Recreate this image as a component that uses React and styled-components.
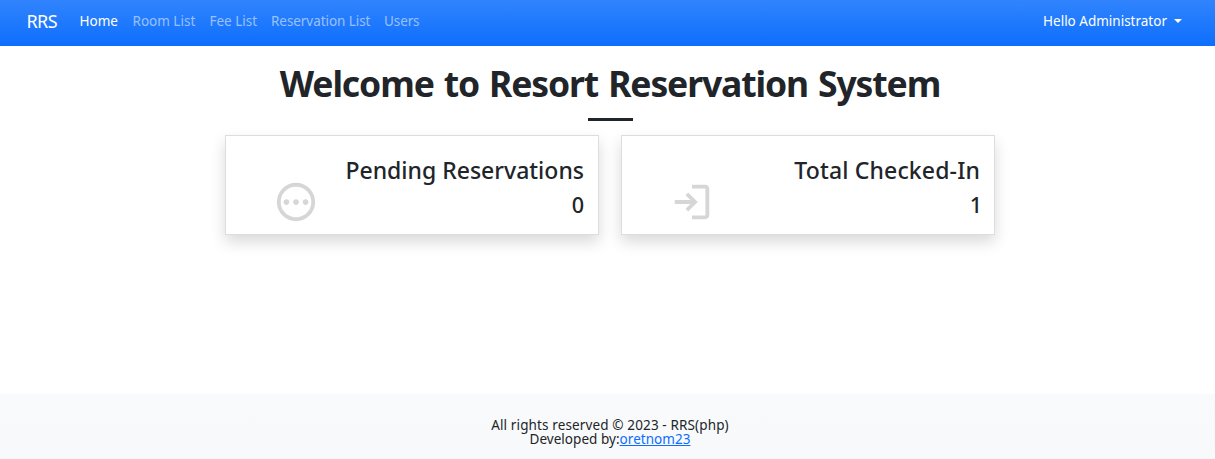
import React from "react";
import styled, { createGlobalStyle } from "styled-components";

const GlobalStyle = createGlobalStyle`
  *, *::before, *::after { box-sizing: border-box; }
  body {
    margin: 0;
    background: #fff;
    color: #212529;
    font-family: "Noto Sans", "Open Sans", sans-serif;
    font-size: 14px;
    overflow: hidden;
  }
`;

const Page = styled.div`
  display: flex;
  flex-direction: column;
  height: 459px;
`;

const Navbar = styled.nav`
  display: flex;
  align-items: center;
  height: 46px;
  padding: 0 33px 4px 26.5px;
  background: linear-gradient(180deg, #3184fd, #0d6efd);
  color: #fff;
  white-space: nowrap;
`;

const Brand = styled.a`
  width: 53px;
  font-size: 18px;
  line-height: 28px;
  letter-spacing: -0.6px;
`;

const NavLinks = styled.div`
  display: flex;
  flex: 1;
`;

const NavLink = styled.a`
  width: ${(p) => p.$width}px;
  font-size: 13.5px;
  line-height: 20px;
  letter-spacing: ${(p) => p.$spacing || 0}px;
  color: ${(p) => (p.$active ? "#fff" : "rgba(255, 255, 255, 0.55)")};
`;

const UserMenu = styled.a`
  display: flex;
  align-items: center;
  gap: 7px;
  font-size: 13.5px;
  line-height: 20px;
`;

const Caret = styled.span`
  border: 4px solid transparent;
  border-top-color: #fff;
  border-bottom: 0;
`;

const Main = styled.main`
  flex: 1;
  display: flex;
  flex-direction: column;
  align-items: center;
  padding: 15px 0 0 5px;
`;

const Title = styled.h1`
  margin: 0;
  font-size: 35.5px;
  line-height: 44px;
  font-weight: 700;
  letter-spacing: -1.12px;
  word-spacing: 1.9px;
  white-space: nowrap;
`;

const Rule = styled.hr`
  width: 45px;
  height: 3px;
  margin: 13px 0 14px;
  border: 0;
  background: #212529;
`;

const Cards = styled.div`
  display: flex;
  gap: 22px;
`;

const Card = styled.section`
  display: flex;
  justify-content: space-between;
  width: 374px;
  height: 100px;
  padding: 17px 14px 0 47px;
  border: 1px solid #dcdddf;
  background: #fff;
  box-shadow: 0 7px 14px rgba(0, 0, 0, 0.15);
`;

const CardIcon = styled.svg`
  width: 46px;
  height: 46px;
  margin-top: 26px;
  fill: #d6d6d6;
`;

const CardText = styled.div`
  font-weight: 500;
  line-height: 34px;
  text-align: right;
  white-space: nowrap;
`;

const CardLabel = styled.div`
  font-size: 23px;
  letter-spacing: ${(p) => p.$spacing}px;
`;

const CardValue = styled.div`
  margin-right: ${(p) => -p.$outset}px;
  font-size: 21.6px;
  line-height: 35px;
`;

const Footer = styled.footer`
  height: 65px;
  padding: 24px 0 0 5px;
  background: linear-gradient(180deg, #f9fafb, #f8f9fa);
  font-size: 13.5px;
  line-height: 14px;
  text-align: center;
`;

const FooterLine = styled.div`
  letter-spacing: ${(p) => p.$spacing}px;
`;

const FooterLink = styled.a`
  color: #0d6efd;
  text-decoration: underline;
`;

const links = [
  { label: "Home", width: 53, active: true },
  { label: "Room List", width: 77 },
  { label: "Fee List", width: 61.5 },
  { label: "Reservation List", width: 113, spacing: -0.06 },
  { label: "Users", width: 40, spacing: -0.1 },
];

const pendingPath =
  "M280-420q25 0 42.500-17.500T340-480q0-25-17.500-42.500T280-540q-25 0-42.500 17.500T220-480q0 25 17.500 42.500T280-420Zm200 0q25 0 42.500-17.500T540-480q0-25-17.500-42.500T480-540q-25 0-42.500 17.500T420-480q0 25 17.500 42.500T480-420Zm200 0q25 0 42.500-17.500T740-480q0-25-17.500-42.500T680-540q-25 0-42.500 17.500T620-480q0 25 17.500 42.500T680-420ZM480-80A400 400 0 1 1 480-880A400 400 0 1 1 480-80ZM480-160A320 320 0 1 0 480-800A320 320 0 1 0 480-160Z";

const loginPath =
  "M480-120v-80h280v-560H480v-80h280q33 0 56.500 23.500T840-760v560q0 33-23.500 56.500T760-120H480Zm-80-160-55-58 102-102H120v-80h327L345-622l55-58 200 200-200 200Z";

const cards = [
  { label: "Pending Reservations", value: 0, path: pendingPath, spacing: 0, outset: 0 },
  { label: "Total Checked-In", value: 1, path: loginPath, spacing: 0.15, outset: 2 },
];

export default function App() {
  return (
    <Page>
      <GlobalStyle />
      <Navbar>
        <Brand>RRS</Brand>
        <NavLinks>
          {links.map((l) => (
            <NavLink key={l.label} $width={l.width} $active={l.active} $spacing={l.spacing}>
              {l.label}
            </NavLink>
          ))}
        </NavLinks>
        <UserMenu>
          Hello Administrator
          <Caret />
        </UserMenu>
      </Navbar>
      <Main>
        <Title>Welcome to Resort Reservation System</Title>
        <Rule />
        <Cards>
          {cards.map((c) => (
            <Card key={c.label}>
              <CardIcon viewBox="0 -960 960 960">
                <path d={c.path} />
              </CardIcon>
              <CardText>
                <CardLabel $spacing={c.spacing}>{c.label}</CardLabel>
                <CardValue $outset={c.outset}>{c.value}</CardValue>
              </CardText>
            </Card>
          ))}
        </Cards>
      </Main>
      <Footer>
        <FooterLine $spacing={0.13}>All rights reserved © 2023 - RRS(php)</FooterLine>
        <FooterLine $spacing={0.04}>
          Developed by:<FooterLink>oretnom23</FooterLink>
        </FooterLine>
      </Footer>
    </Page>
  );
}
